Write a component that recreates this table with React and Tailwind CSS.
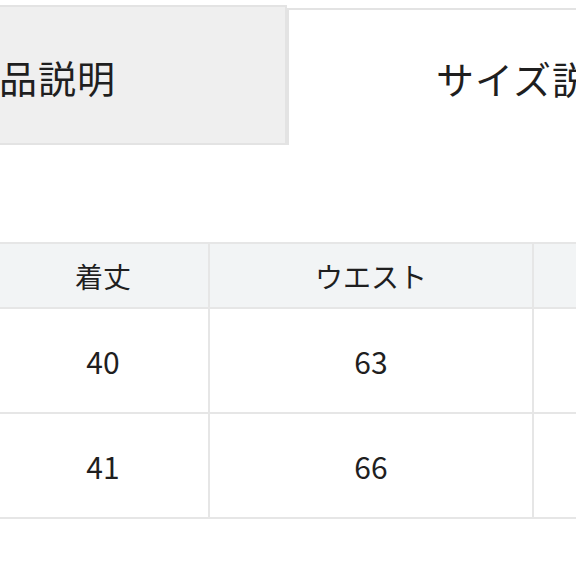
const font = { fontFamily: '"Noto Sans CJK JP", "Noto Sans", sans-serif' }

const columns = ['着丈', 'ウエスト', '']
const rows = [
  ['40', '63', ''],
  ['41', '66', '']
]

export default function App() {
  return (
    <div className="w-[576px] h-[576px] overflow-hidden bg-white text-[#1f1f1f]" style={font}>
      {/* Tabs */}
      <div className="flex items-start h-[145px] pt-[5px]">
        <div className="-ml-[211px] w-[498px] h-[140px] shrink-0 bg-[#efefef] border-2 border-[#e3e3e3] flex items-center justify-center pt-1">
          <span className="text-[38px] leading-none tracking-[1px] whitespace-nowrap">商品説明</span>
        </div>
        <div className="mt-[3px] w-[490px] h-[137px] shrink-0 bg-white border-l-2 border-t-2 border-[#e3e3e3] flex items-center justify-center">
          <span className="text-[38px] leading-none tracking-[1px] whitespace-nowrap">サイズ説明</span>
        </div>
      </div>

      {/* Size table */}
      <table className="mt-[97px] -ml-[4px] border-collapse table-fixed w-[860px] max-w-none">
        <colgroup>
          <col className="w-[212px]" />
          <col className="w-[324px]" />
          <col className="w-[324px]" />
        </colgroup>
        <thead>
          <tr className="h-[65px] bg-[#f2f4f5]">
            {columns.map((c, j) => (
              <th key={j} className="border-2 border-[#e6e6e6] text-center font-normal text-[28px] leading-none">
                {c}
              </th>
            ))}
          </tr>
        </thead>
        <tbody>
          {rows.map((r, i) => (
            <tr key={i} className="h-[105px]">
              {r.map((v, j) => (
                <td key={j} className="border-2 border-[#e6e6e6] text-center text-[30px] leading-none">
                  {v}
                </td>
              ))}
            </tr>
          ))}
        </tbody>
      </table>
    </div>
  )
}
